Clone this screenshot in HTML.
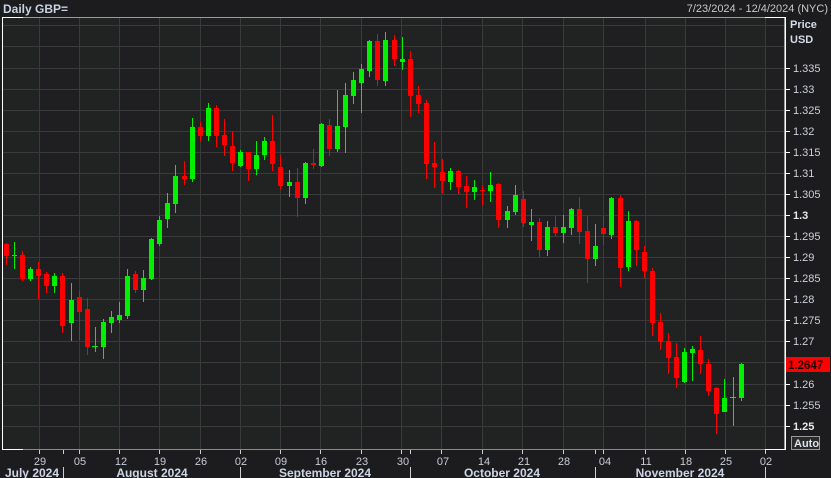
<!DOCTYPE html>
<html><head><meta charset="utf-8"><style>
html,body{margin:0;padding:0;background:#1c1c1d;width:831px;height:478px;overflow:hidden}
svg{display:block}
text{font-family:"Liberation Sans","DejaVu Sans",sans-serif}
</style></head><body>
<svg width="831" height="478" viewBox="0 0 831 478" xmlns="http://www.w3.org/2000/svg">
<rect x="0" y="0" width="831" height="478" fill="#1c1b1d"/>
<!-- chart bg bands -->
<rect x="2" y="17" width="783" height="432" fill="#212322"/>
<g fill="#1f1e20">
<rect x="39" y="17" width="40" height="432"/>
<rect x="119" y="17" width="40" height="432"/>
<rect x="200" y="17" width="40" height="432"/>
<rect x="280" y="17" width="40" height="432"/>
<rect x="361" y="17" width="40" height="432"/>
<rect x="441" y="17" width="41" height="432"/>
<rect x="522" y="17" width="41" height="432"/>
<rect x="603" y="17" width="42" height="432"/>
<rect x="685" y="17" width="40" height="432"/>
<rect x="765" y="17" width="20" height="432"/>
</g>
<!-- grid -->
<g stroke="#3a3a3b" stroke-width="1">
<path d="M39.5 17V449M79.5 17V449M119.5 17V449M159.5 17V449M200.5 17V449M240.5 17V449M280.5 17V449M320.5 17V449M361.5 17V449M401.5 17V449M441.5 17V449M482.5 17V449M522.5 17V449M563.5 17V449M603.5 17V449M645.5 17V449M685.5 17V449M725.5 17V449M765.5 17V449"/>
<path d="M2 25.5H785M2 46.5H785M2 68.5H785M2 89.5H785M2 110.5H785M2 131.5H785M2 152.5H785M2 173.5H785M2 194.5H785M2 215.5H785M2 236.5H785M2 257.5H785M2 278.5H785M2 299.5H785M2 320.5H785M2 341.5H785M2 362.5H785M2 384.5H785M2 405.5H785M2 426.5H785"/>
</g>
<!-- frame -->
<path d="M2.5 449V17.5H23" stroke="#fff" fill="none"/>
<path d="M23 17.5H784.5V449" stroke="#9a9a9a" fill="none"/>
<path d="M765 17.5H785.5V449.5H765" stroke="#fff" fill="none"/>
<path d="M2 449.5H23" stroke="#fff"/>
<path d="M23 449.5H765" stroke="#8a8a8a"/>
<!-- candles red -->
<g fill="#ff0000" stroke="#ff0000">
<path stroke-width="1" fill="none" d="M6.5 243V265M22.5 251V281M38.5 262V299M46.5 272V293M62.5 273V333M79.5 291V340M87.5 298V355M135.5 271V293M184.5 161V185M200.5 122V141M216.5 105V147M224.5 119V156M232.5 131V171M248.5 152V181M272.5 115V171M280.5 155V189M297.5 168V217M313.5 149V169M329.5 119V156M377.5 34V86M394.5 35V66M410.5 51V117M418.5 86V113M426.5 100V179M434.5 142V188M442.5 159V193M458.5 170V194M466.5 176V208M482.5 185V205M498.5 183V228M523.5 191V227M539.5 218V257M555.5 216V236M579.5 197V244M587.5 216V283M603.5 216V245M620.5 195V287M636.5 220V266M644.5 246V278M652.5 268V336M660.5 313V350M668.5 333V374M676.5 343V388M700.5 336V374M708.5 359V396M716.5 387V434"/>
<g stroke="none">
<rect x="4" y="244" width="5" height="12"/><rect x="20" y="255" width="5" height="24"/><rect x="36" y="269" width="5" height="7"/><rect x="44" y="274" width="5" height="12"/><rect x="60" y="276" width="5" height="50"/><rect x="77" y="297" width="5" height="15"/><rect x="85" y="309" width="5" height="38"/><rect x="133" y="274" width="5" height="16"/><rect x="182" y="176" width="5" height="3"/><rect x="198" y="127" width="5" height="9"/><rect x="214" y="108" width="5" height="28"/><rect x="222" y="135" width="5" height="10"/><rect x="230" y="146" width="5" height="17"/><rect x="246" y="152" width="5" height="17"/><rect x="270" y="141" width="5" height="23"/><rect x="278" y="167" width="5" height="19"/><rect x="295" y="182" width="5" height="16"/><rect x="311" y="163" width="5" height="2"/><rect x="327" y="125" width="5" height="24"/><rect x="375" y="41" width="5" height="39"/><rect x="392" y="40" width="5" height="19"/><rect x="408" y="59" width="5" height="37"/><rect x="416" y="95" width="5" height="9"/><rect x="424" y="103" width="5" height="61"/><rect x="432" y="163" width="5" height="4"/><rect x="440" y="172" width="5" height="9"/><rect x="456" y="171" width="5" height="16"/><rect x="464" y="186" width="5" height="6"/><rect x="480" y="190" width="5" height="1"/><rect x="496" y="184" width="5" height="36"/><rect x="521" y="199" width="5" height="24"/><rect x="537" y="222" width="5" height="28"/><rect x="553" y="227" width="5" height="6"/><rect x="577" y="209" width="5" height="23"/><rect x="585" y="231" width="5" height="28"/><rect x="601" y="228" width="5" height="6"/><rect x="618" y="198" width="5" height="70"/><rect x="634" y="221" width="5" height="29"/><rect x="642" y="252" width="5" height="19"/><rect x="650" y="271" width="5" height="52"/><rect x="658" y="322" width="5" height="20"/><rect x="666" y="341" width="5" height="17"/><rect x="674" y="357" width="5" height="21"/><rect x="698" y="350" width="5" height="14"/><rect x="706" y="364" width="5" height="27"/><rect x="714" y="388" width="5" height="26"/>
</g></g>
<!-- candles green -->
<g fill="#00f000" stroke="#00f000">
<path stroke-width="1" fill="none" d="M14.5 242V269M30.5 267V281M54.5 273V293M71.5 283V341M95.5 327V352M103.5 319V359M111.5 311V333M119.5 302V323M127.5 269V319M143.5 270V302M151.5 238V280M159.5 216V246M167.5 193V228M175.5 165V213M192.5 118V182M208.5 103V141M240.5 150V167M256.5 141V175M264.5 137V160M289.5 170V197M305.5 162V204M321.5 123V167M337.5 90V152M345.5 83V153M353.5 72V104M361.5 64V113M369.5 40V77M385.5 32V86M402.5 37V70M450.5 168V190M474.5 180V200M490.5 172V202M507.5 206V228M515.5 185V215M531.5 209V241M547.5 221V256M563.5 215V243M571.5 208V235M595.5 224V266M611.5 197V239M628.5 211V271M684.5 348V383M692.5 346V381M724.5 379V412M733.5 377V426M741.5 363V401"/>
<g stroke="none">
<rect x="12" y="255" width="5" height="1"/><rect x="28" y="269" width="5" height="10"/><rect x="52" y="276" width="5" height="10"/><rect x="69" y="300" width="5" height="23"/><rect x="92" y="346" width="6" height="1"/><rect x="101" y="322" width="5" height="25"/><rect x="109" y="317" width="5" height="6"/><rect x="117" y="315" width="5" height="5"/><rect x="125" y="276" width="5" height="40"/><rect x="141" y="278" width="5" height="12"/><rect x="149" y="239" width="5" height="40"/><rect x="157" y="220" width="5" height="24"/><rect x="165" y="203" width="5" height="16"/><rect x="173" y="176" width="5" height="28"/><rect x="190" y="127" width="5" height="52"/><rect x="206" y="108" width="5" height="28"/><rect x="238" y="152" width="5" height="14"/><rect x="254" y="155" width="5" height="14"/><rect x="262" y="141" width="5" height="14"/><rect x="287" y="182" width="5" height="4"/><rect x="303" y="163" width="5" height="35"/><rect x="319" y="124" width="5" height="42"/><rect x="335" y="126" width="5" height="23"/><rect x="343" y="95" width="5" height="32"/><rect x="351" y="80" width="5" height="16"/><rect x="359" y="69" width="5" height="14"/><rect x="367" y="41" width="5" height="30"/><rect x="383" y="40" width="5" height="41"/><rect x="400" y="59" width="5" height="3"/><rect x="448" y="171" width="5" height="11"/><rect x="472" y="187" width="5" height="5"/><rect x="488" y="185" width="5" height="6"/><rect x="505" y="211" width="5" height="9"/><rect x="513" y="195" width="5" height="17"/><rect x="529" y="222" width="5" height="3"/><rect x="545" y="227" width="5" height="23"/><rect x="561" y="227" width="5" height="6"/><rect x="569" y="209" width="5" height="19"/><rect x="593" y="246" width="5" height="13"/><rect x="609" y="198" width="5" height="37"/><rect x="626" y="221" width="5" height="46"/><rect x="682" y="352" width="5" height="30"/><rect x="690" y="349" width="5" height="4"/><rect x="722" y="398" width="5" height="14"/><rect x="730" y="397" width="6" height="1"/><rect x="739" y="364" width="5" height="34"/>
</g></g>
<!-- header -->
<text x="3" y="13" font-size="12" font-weight="bold" fill="#c9d2e2">Daily GBP=</text>
<text x="828" y="12" font-size="11" fill="#c8c8c8" text-anchor="end">7/23/2024 - 12/4/2024 (NYC)</text>
<text x="790" y="28" font-size="11" font-weight="bold" fill="#d4dbe8">Price</text>
<text x="790" y="43" font-size="11" font-weight="bold" fill="#d4dbe8">USD</text>
<!-- y ticks -->
<path stroke="#fff" d="M785 68.5H790M785 89.5H790M785 110.5H790M785 131.5H790M785 152.5H790M785 173.5H790M785 194.5H790M785 215.5H790M785 236.5H790M785 257.5H790M785 278.5H790M785 299.5H790M785 320.5H790M785 341.5H790M785 384.5H790M785 405.5H790M785 426.5H790"/>
<g font-size="11" fill="#ccd0d8">
<text x="793" y="72">1.335</text><text x="793" y="93">1.33</text><text x="793" y="114">1.325</text><text x="793" y="135">1.32</text><text x="793" y="156">1.315</text><text x="793" y="177">1.31</text><text x="793" y="198">1.305</text><text x="793" y="219" font-weight="bold" fill="#e8e8e8">1.3</text><text x="793" y="240">1.295</text><text x="793" y="261">1.29</text><text x="793" y="282">1.285</text><text x="793" y="303">1.28</text><text x="793" y="324">1.275</text><text x="793" y="345">1.27</text><text x="793" y="388">1.26</text><text x="793" y="409">1.255</text><text x="793" y="430" font-weight="bold" fill="#e8e8e8">1.25</text>
</g>
<rect x="786" y="357" width="44" height="15" fill="#ff0000"/>
<text x="788" y="369" font-size="11.5" font-weight="bold" fill="#1a0000">1.2647</text>
<rect x="791.5" y="436.5" width="28" height="13" fill="#2a2a2a" stroke="#9a9a9a"/>
<text x="794" y="447" font-size="11" font-weight="bold" fill="#dde2ea">Auto</text>
<!-- x ticks -->
<path stroke="#cfcfcf" d="M39.5 450V454M63.5 450V454M79.5 450V454M119.5 450V454M159.5 450V454M200.5 450V454M240.5 450V454M280.5 450V454M320.5 450V454M361.5 450V454M401.5 450V454M410.5 450V454M441.5 450V454M482.5 450V454M522.5 450V454M563.5 450V454M595.5 450V454M603.5 450V454M645.5 450V454M685.5 450V454M725.5 450V454M765.5 450V454"/>
<g font-size="11" fill="#c8cdd8" text-anchor="middle">
<text x="40" y="465">29</text><text x="80" y="465">05</text><text x="121" y="465">12</text><text x="160" y="465">19</text><text x="201" y="465">26</text><text x="241" y="465">02</text><text x="281" y="465">09</text><text x="321" y="465">16</text><text x="362" y="465">23</text><text x="403" y="465">30</text><text x="443" y="465">07</text><text x="484" y="465">14</text><text x="524" y="465">21</text><text x="564" y="465">28</text><text x="605" y="465">04</text><text x="646" y="465">11</text><text x="686" y="465">18</text><text x="726" y="465">25</text><text x="766" y="465">02</text>
</g>
<path stroke="#cfcfcf" d="M63.5 467V478M240.5 467V478M410.5 467V478M595.5 467V478M765.5 467V478"/>
<g font-size="12" font-weight="bold" fill="#cdd6e6" text-anchor="middle">
<text x="32" y="477">July 2024</text><text x="152" y="477">August 2024</text><text x="325" y="477">September 2024</text><text x="502" y="477">October 2024</text><text x="680" y="477">November 2024</text>
</g>
</svg>
</body></html>
